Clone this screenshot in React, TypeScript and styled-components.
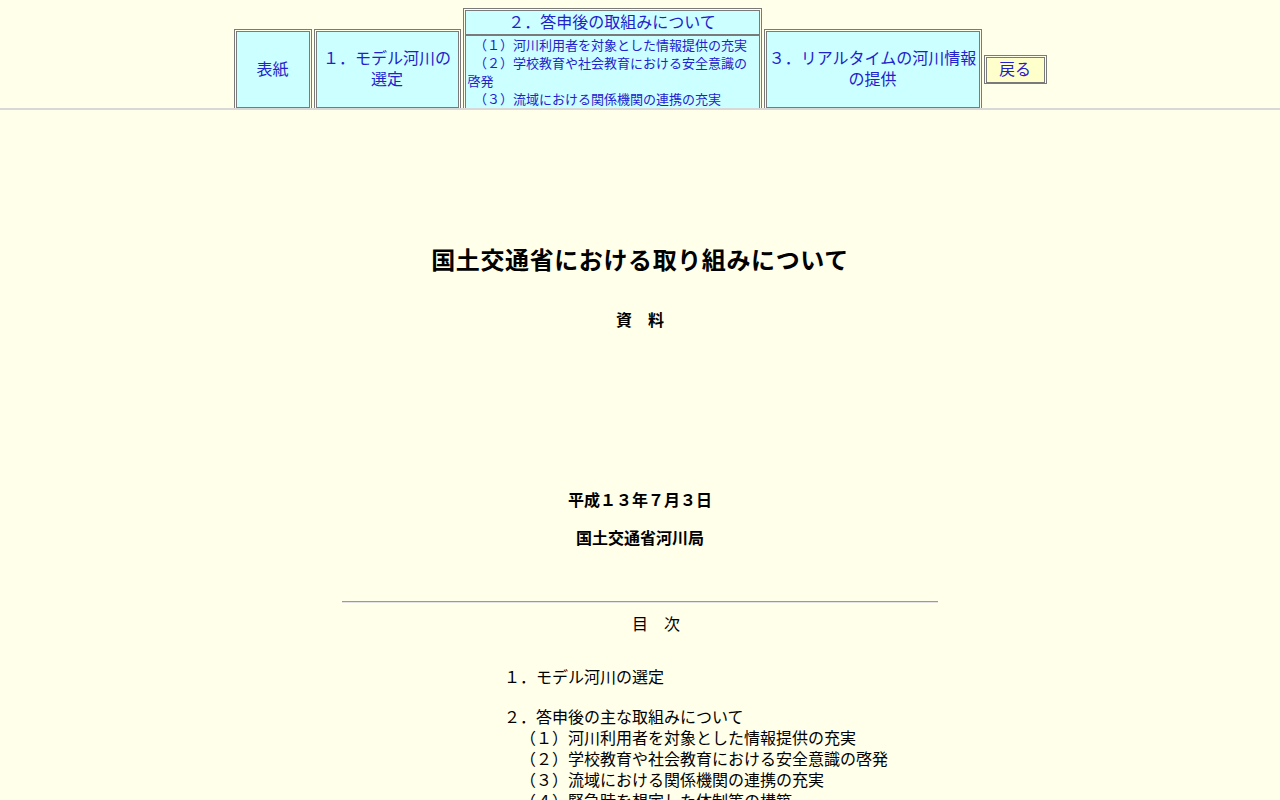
import React from "react";
import styled, { createGlobalStyle } from "styled-components";

const Global = createGlobalStyle`
  html, body { margin: 0; padding: 0; }
  body {
    background: #ffffea;
    font-family: "Noto Sans CJK JP", "Noto Sans", sans-serif;
    color: #000;
    overflow: hidden;
  }
`;

const TopFrame = styled.div`
  height: 108px;
  overflow: hidden;
  background: #ffffea;
  border-bottom: 2px solid #d8d8d8;
`;

const Nav = styled.div`
  display: flex;
  justify-content: center;
  align-items: center;
  gap: 2px;
  padding-top: 8px;
  height: 123px;
`;

const NavBox = styled.div<{ $w: number; $h: number }>`
  box-sizing: border-box;
  width: ${(p) => p.$w}px;
  height: ${(p) => p.$h}px;
  border: 1px solid #7a7a7a;
  padding: 1px;
  display: flex;
  flex-direction: column;
  gap: 1px;
  flex: none;
`;

const NavCell = styled.a<{ $bg?: string }>`
  box-sizing: border-box;
  flex: 1;
  border: 1px solid #7a7a7a;
  background: ${(p) => p.$bg || "#ccffff"};
  color: #2222cc;
  text-decoration: none;
  font-size: 16px;
  line-height: 21px;
  display: flex;
  align-items: center;
  justify-content: center;
  text-align: center;
  padding-bottom: 3px;
`;

const HeadCell = styled.a`
  box-sizing: border-box;
  height: 25px;
  flex: none;
  border: 1px solid #7a7a7a;
  background: #ccffff;
  color: #2222cc;
  text-decoration: none;
  font-size: 16px;
  line-height: 20px;
  text-align: center;
`;

const SubCell = styled.div`
  box-sizing: border-box;
  flex: 1;
  border: 1px solid #7a7a7a;
  background: #ccffff;
  padding: 0 0 0 2px;
  margin-top: -1px;
  overflow: hidden;
`;

const SubLink = styled.a`
  display: block;
  color: #2222cc;
  text-decoration: none;
  font-size: 13px;
  line-height: 18px;
  text-align: left;
`;

const Main = styled.div`
  padding-top: 133px;
  text-align: center;
`;

const Title = styled.h1`
  margin: 0;
  font-size: 24px;
  line-height: 32px;
  font-weight: bold;
  letter-spacing: 0.6px;
`;

const Bold = styled.p<{ $mt: number }>`
  margin: ${(p) => p.$mt}px 0 0;
  font-size: 16px;
  line-height: 24px;
  font-weight: bold;
`;

const Rule = styled.hr`
  width: 596px;
  margin: 52px auto 0;
  border: none;
  border-top: 1px solid #9a9a9a;
  border-bottom: 1px solid #e4e4e4;
`;

const Contents = styled.p`
  margin: 8px 0 0;
  padding-left: 32px;
  font-size: 16px;
  line-height: 24px;
`;

const Toc = styled.div`
  margin: 31px 0 0 504px;
  text-align: left;
  font-size: 16px;
  line-height: 21px;
`;

const TocItem = styled.div<{ $mt?: number; $sub?: boolean }>`
  margin-top: ${(p) => p.$mt || 0}px;
  padding-left: ${(p) => (p.$sub ? 16 : 0)}px;
  white-space: nowrap;
`;

const subs = [
  "（１）河川利用者を対象とした情報提供の充実",
  "（２）学校教育や社会教育における安全意識の啓発",
  "（３）流域における関係機関の連携の充実",
  "（４）緊急時を想定した体制等の構築",
];

export default function App() {
  return (
    <>
      <Global />
      <TopFrame>
        <Nav>
          <NavBox $w={78} $h={81}>
            <NavCell href="#">表紙</NavCell>
          </NavBox>
          <NavBox $w={147} $h={81}>
            <NavCell href="#">１．モデル河川の<br />選定</NavCell>
          </NavBox>
          <NavBox $w={299} $h={123}>
            <HeadCell href="#">２．答申後の取組みについて</HeadCell>
            <SubCell>
              {subs.map((s) => (
                <SubLink key={s} href="#">　{s}</SubLink>
              ))}
            </SubCell>
          </NavBox>
          <NavBox $w={218} $h={81}>
            <NavCell href="#">３．リアルタイムの河川情報<br />の提供</NavCell>
          </NavBox>
          <NavBox $w={63} $h={29}>
            <NavCell href="#" $bg="#ffffcc">戻る</NavCell>
          </NavBox>
        </Nav>
      </TopFrame>
      <Main>
        <Title>国土交通省における取り組みについて</Title>
        <Bold $mt={32}>資　料</Bold>
        <Bold $mt={156}>平成１３年７月３日</Bold>
        <Bold $mt={14}>国土交通省河川局</Bold>
        <Rule />
        <Contents>目　次</Contents>
        <Toc>
          <TocItem>１．モデル河川の選定</TocItem>
          <TocItem $mt={19}>２．答申後の主な取組みについて</TocItem>
          {subs.map((s) => (
            <TocItem key={s} $sub>{s}</TocItem>
          ))}
        </Toc>
      </Main>
    </>
  );
}
